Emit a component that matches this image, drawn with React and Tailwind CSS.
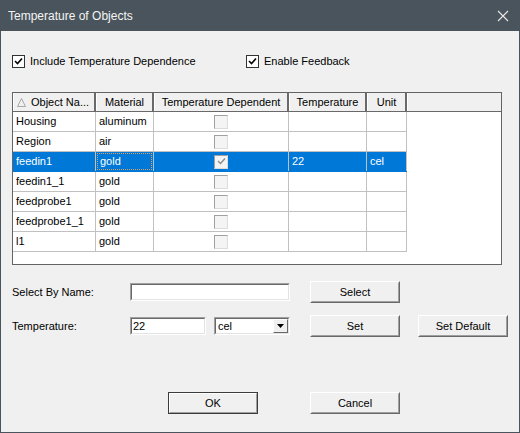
import React from "react";

const rows = [
  { name: "Housing", mat: "aluminum" },
  { name: "Region", mat: "air" },
  { name: "feedin1", mat: "gold", sel: true, temp: "22", unit: "cel" },
  { name: "feedin1_1", mat: "gold" },
  { name: "feedprobe1", mat: "gold" },
  { name: "feedprobe1_1", mat: "gold" },
  { name: "l1", mat: "gold" },
];

const CheckBox = ({ label }) => (
  <label className="flex items-center gap-[5px]">
    <span className="w-[13px] h-[13px] border border-[#333] bg-white flex items-center justify-center">
      <svg width="9" height="9" viewBox="0 0 9 9">
        <path d="M1 4 L3.5 6.5 L8 1.5" stroke="#000" strokeWidth="1.6" fill="none" />
      </svg>
    </span>
    <span>{label}</span>
  </label>
);

const Btn = ({ children, w = "w-[90px]", def }) => (
  <button
    className={`${w} h-[22px] bg-[#f0f0f0] border ${def ? "border-[#3c3c3c]" : "border-t-white border-l-white border-b-[#696969] border-r-[#696969]"} flex items-center justify-center text-[11px] text-black`}
  >
    <span className={`w-full h-full flex items-center justify-center border ${def ? "border-t-white border-l-white border-b-[#a0a0a0] border-r-[#a0a0a0]" : "border-t-[#f0f0f0] border-l-[#f0f0f0] border-b-[#a0a0a0] border-r-[#a0a0a0]"}`}>
      {children}
    </span>
  </button>
);

const Sunken = ({ w, children }) => (
  <div className={`${w} h-[18px] border border-t-[#a0a0a0] border-l-[#a0a0a0] border-b-white border-r-white`}>
    <div className="w-full h-full border border-t-[#696969] border-l-[#696969] border-b-[#e3e3e3] border-r-[#e3e3e3] bg-white flex items-center px-[1px] text-[11px]">
      {children}
    </div>
  </div>
);

const Head = ({ w, children, last }) => (
  <div className={`${w} h-full border-r-2 ${last ? "border-r-[#f0f0f0] flex-1" : "border-r-[#696969]"} bg-[#f0f0f0] border-l border-l-white flex items-center justify-center shrink-0`}>
    {children}
  </div>
);

const TableCheck = ({ checked }) => (
  <span className="w-[14px] h-[14px] border border-t-[#a0a0a0] border-l-[#a0a0a0] border-b-[#dcdcdc] border-r-[#dcdcdc] bg-[#f4f4f4] flex items-center justify-center">
    {checked && (
      <svg width="9" height="9" viewBox="0 0 9 9">
        <path d="M1 4 L3.5 6.5 L8 1.5" stroke="#8a8a8a" strokeWidth="1.4" fill="none" />
      </svg>
    )}
  </span>
);

export default function App() {
  return (
    <div
      className="w-[520px] h-[433px] bg-[#f0f0f0] border border-[#4a545c] border-t-0 flex flex-col text-black text-[11px]"
      style={{ fontFamily: '"Liberation Sans", Arial, sans-serif' }}
    >
      <div className="h-[31px] bg-[#4a545c] text-white flex items-center justify-between pl-[8px] pr-[8px] -mx-[1px] shrink-0">
        <span className="text-[12px] text-[#f4f4f4]">Temperature of Objects</span>
        <svg width="12" height="12" viewBox="0 0 12 12" className="mr-[3px]">
          <path d="M1 1 L11 11 M11 1 L1 11" stroke="#e8e8e8" strokeWidth="1.1" />
        </svg>
      </div>

      <div className="pl-[11px] pr-[11px] flex flex-col">
        <div className="mt-[24px] flex items-center h-[13px]">
          <div className="w-[234px]"><CheckBox label="Include Temperature Dependence" /></div>
          <CheckBox label="Enable Feedback" />
        </div>

        <div className="mt-[24px] w-[490px] h-[173px] border border-[#646464] bg-white flex flex-col">
          <div className="h-[19px] flex border-b border-b-[#696969] shrink-0">
            <Head w="w-[83px]">
              <span className="flex items-center gap-[5px] w-full pl-[3px]">
                <svg width="9" height="9" viewBox="0 0 9 9">
                  <path d="M0.5 8.5 L4.5 0.5 L8.5 8.5 Z" stroke="#a0a0a0" fill="none" strokeWidth="0.9" />
                </svg>
                Object Na...
              </span>
            </Head>
            <Head w="w-[58px]">Material</Head>
            <Head w="w-[135px]">Temperature Dependent</Head>
            <Head w="w-[78px]">Temperature</Head>
            <Head w="w-[40px]">Unit</Head>
            <Head w="" last />
          </div>
          {rows.map((r) => (
            <div key={r.name} className="h-[20px] flex shrink-0">
              <div className={`flex border-b border-[#c0c0c0] ${r.sel ? "bg-[#0078d7] text-white border-b-[#0078d7]" : ""}`}>
                <div className="w-[83px] border-r border-[#c0c0c0] pl-[3px] flex items-center">{r.name}</div>
                <div className="w-[58px] border-r border-[#c0c0c0] flex items-center p-[1px]">
                  <span className={`w-full h-full flex items-center pl-[2px] ${r.sel ? "border border-dotted border-[#e0a060]" : ""}`}>{r.mat}</span>
                </div>
                <div className="w-[135px] border-r border-[#c0c0c0] flex items-center justify-center">
                  <TableCheck checked={r.sel} />
                </div>
                <div className="w-[78px] border-r border-[#c0c0c0] pl-[3px] flex items-center">{r.temp}</div>
                <div className="w-[40px] border-r border-[#c0c0c0] pl-[3px] flex items-center">{r.unit}</div>
              </div>
            </div>
          ))}
        </div>

        <div className="mt-[16px] flex items-center h-[22px]">
          <span className="w-[118px]">Select By Name:</span>
          <Sunken w="w-[160px]" />
          <div className="ml-[20px]"><Btn>Select</Btn></div>
        </div>

        <div className="mt-[12px] flex items-center h-[22px]">
          <span className="w-[118px]">Temperature:</span>
          <Sunken w="w-[76px]">22</Sunken>
          <div className="ml-[8px] w-[76px] h-[18px] border border-t-[#a0a0a0] border-l-[#a0a0a0] border-b-white border-r-white">
            <div className="w-full h-full border border-t-[#696969] border-l-[#696969] border-b-[#e3e3e3] border-r-[#e3e3e3] bg-white flex items-center justify-between pl-[2px]">
              <span>cel</span>
              <span className="w-[15px] h-full bg-[#f0f0f0] border border-t-white border-l-white border-b-[#696969] border-r-[#696969] flex items-center justify-center">
                <svg width="7" height="4" viewBox="0 0 7 4"><path d="M0 0 H7 L3.5 4 Z" fill="#000" /></svg>
              </span>
            </div>
          </div>
          <div className="ml-[20px]"><Btn>Set</Btn></div>
          <div className="ml-[18px]"><Btn>Set Default</Btn></div>
        </div>

        <div className="mt-[55px] flex items-center h-[22px]">
          <div className="ml-[156px]"><Btn def>OK</Btn></div>
          <div className="ml-[52px]"><Btn>Cancel</Btn></div>
        </div>
      </div>
    </div>
  );
}
